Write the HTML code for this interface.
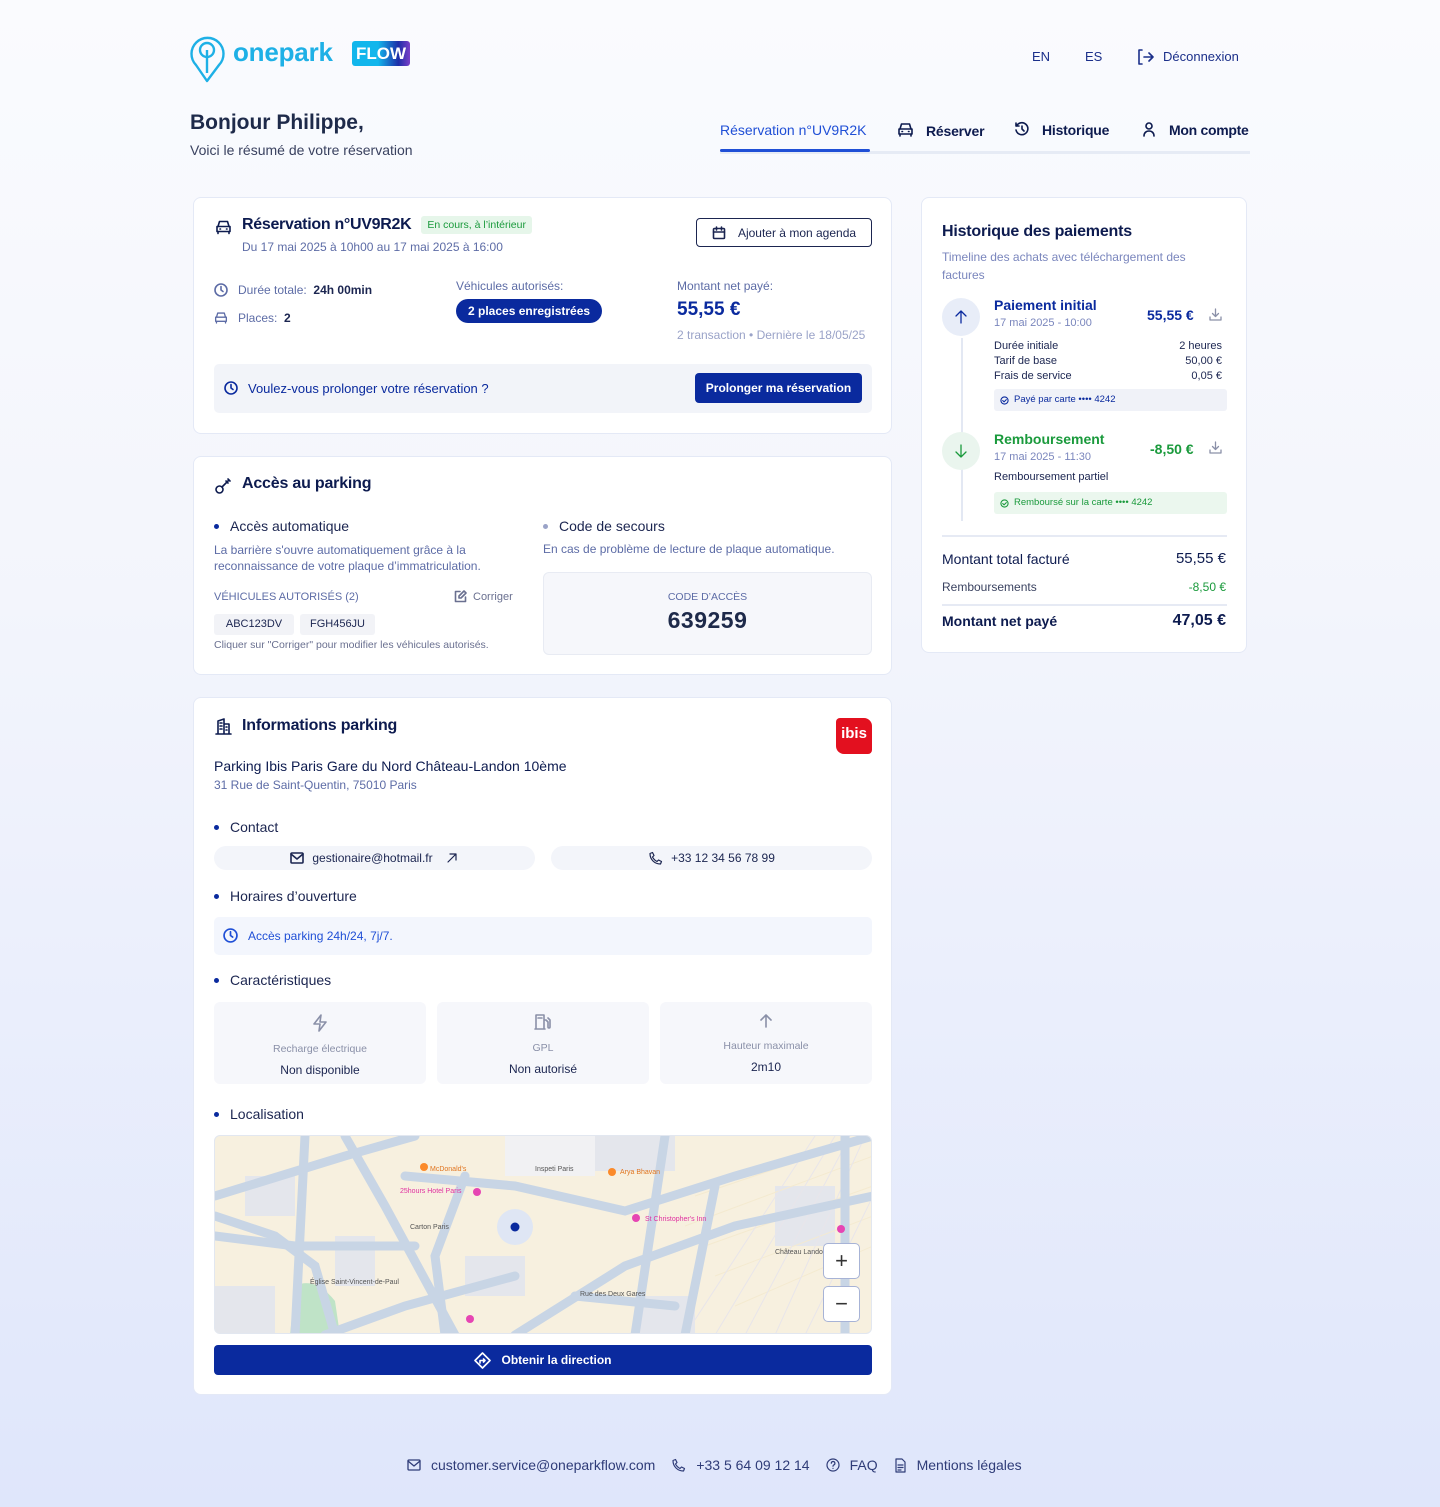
<!DOCTYPE html>
<html><head><meta charset="utf-8"><style>
*{box-sizing:border-box;margin:0;padding:0}
body{width:1440px;height:1507px;font-family:"Liberation Sans",Arial,sans-serif;background:linear-gradient(180deg,#fafbfe 0%,#f3f5fc 40%,#dfe6fb 100%);position:relative;overflow:hidden;color:#0d1b4f}
.a{position:absolute}
.card{position:absolute;background:#fff;border:1px solid #e4e9f6;border-radius:8px}
.nav{color:#0d1b4f;font-size:14px;font-weight:bold}
.muted{color:#5d6ca6}
.ico{fill:none;stroke:currentColor;stroke-width:1.6;stroke-linecap:round;stroke-linejoin:round}
.dot{width:5px;height:5px;border-radius:50%;background:#0a2a9e;display:inline-block}
.pill{position:absolute;background:#f3f5fa;border-radius:14px;height:24px;font-size:12px;display:flex;align-items:center;justify-content:center;gap:8px;color:#1b2550}
.feat{position:absolute;background:#f6f7fb;border-radius:6px;height:82px;width:212px;text-align:center;top:304px}
.feat .l{font-size:10.5px;color:#8a90a8;margin-top:6px}
.feat .v{font-size:12px;color:#1b2550;margin-top:8px}
</style></head><body>

<!-- Logo -->
<svg class="a" style="left:189px;top:31px" width="38" height="52" viewBox="0 0 38 52"><path d="M18 50 L7 34 A16 16 0 1 1 30 34 Z" fill="none" stroke="#1eb0e6" stroke-width="2.4" stroke-linejoin="round"/><circle cx="18" cy="19" r="7" fill="none" stroke="#1eb0e6" stroke-width="2.4"/><path d="M18 19 V42" stroke="#1eb0e6" stroke-width="2.4"/></svg>
<div class="a" style="left:233px;top:37px;font-size:26px;font-weight:bold;color:#1eb0e6;letter-spacing:-0.2px">onepark</div>
<div class="a" style="left:352px;top:41px;width:58px;height:25px;border-radius:3px;background:linear-gradient(90deg,#12b6ec 0%,#12b6ec 45%,#1d2ea8 80%,#7a3fc8 100%);color:#fff;font-weight:bold;font-size:17px;text-align:center;line-height:25px">FLOW</div>

<div class="a" style="left:1032px;top:49px;font-size:13px;color:#1b2f8a">EN</div>
<div class="a" style="left:1085px;top:49px;font-size:13px;color:#1b2f8a">ES</div>
<svg class="a ico" style="left:1136px;top:48px;color:#1b2f8a" width="18" height="18" viewBox="0 0 18 18"><path d="M6 2H3v14h3M8 9h9M13 5l4 4-4 4"/></svg>
<div class="a" style="left:1163px;top:49px;font-size:13px;color:#1b2f8a">Déconnexion</div>

<div class="a" style="left:190px;top:111px;font-size:21px;font-weight:bold;color:#1e2a4a">Bonjour Philippe,</div>
<div class="a" style="left:190px;top:142px;font-size:14px;color:#3a4260">Voici le résumé de votre réservation</div>

<!-- tabs -->
<div class="a" style="left:720px;top:151px;width:530px;height:3px;background:#e6ebf5"></div>
<div class="a" style="left:720px;top:149px;width:150px;height:3px;background:#1f4fd6;border-radius:2px"></div>
<div class="a" style="left:720px;top:122px;font-size:14px;color:#1f4fd6">Réservation n°UV9R2K</div>
<svg class="a ico" style="left:897px;top:122px;color:#0d1b4f" width="17" height="16" viewBox="0 0 17 16"><path d="M3 7l1.5-5h8L14 7M2 7h13v5H2zM3 12v2M14 12v2M5 9.5h.5M11.5 9.5h.5"/></svg>
<div class="a nav" style="left:926px;top:123px;letter-spacing:-0.2px">Réserver</div>
<svg class="a ico" style="left:1014px;top:121px;color:#0d1b4f" width="16" height="16" viewBox="0 0 16 16"><path d="M2.5 5A6 6 0 1 1 2 9M2 2v3h3M8 5v3l2 2"/></svg>
<div class="a nav" style="left:1042px;top:122px;letter-spacing:-0.2px">Historique</div>
<svg class="a ico" style="left:1141px;top:121px;color:#0d1b4f" width="16" height="16" viewBox="0 0 16 16"><circle cx="8" cy="5" r="3"/><path d="M3 15c0-3 2-5 5-5s5 2 5 5"/></svg>
<div class="a nav" style="left:1169px;top:122px;letter-spacing:-0.3px">Mon compte</div>

<!-- Card 1 -->
<div class="card" style="left:193px;top:197px;width:699px;height:237px">
  <svg class="a ico" style="left:21px;top:21px;color:#0d1b4f" width="17" height="17" viewBox="0 0 17 16"><path d="M3 7l1.5-5h8L14 7M2 7h13v5H2zM3 12v2M14 12v2M5 9.5h.5M11.5 9.5h.5"/></svg>
  <div class="a" style="left:48px;top:18px;display:flex;align-items:center;gap:10px"><span style="font-size:16px;font-weight:bold;color:#0d1b4f;letter-spacing:-0.3px">Réservation n°UV9R2K</span><span style="background:#e6f6ea;color:#1a9a3c;font-size:10.5px;padding:3px 6px;border-radius:3px">En cours, à l’intérieur</span></div>
  <div class="a muted" style="left:48px;top:42px;font-size:12px">Du 17 mai 2025 à 10h00 au 17 mai 2025 à 16:00</div>
  <div class="a" style="left:502px;top:20px;width:176px;height:29px;border:1px solid #1b2550;border-radius:4px;font-size:12px;color:#1b2550;display:flex;align-items:center;justify-content:center;gap:12px"><svg class="ico" width="14" height="14" viewBox="0 0 14 14"><rect x="1.5" y="2.5" width="11" height="10" rx="1"/><path d="M1.5 6h11M4.5 1v3M9.5 1v3"/></svg>Ajouter à mon agenda</div>

  <svg class="a ico" style="left:20px;top:85px;color:#5d6ca6" width="14" height="14" viewBox="0 0 14 14"><circle cx="7" cy="7" r="6"/><path d="M7 3.5V7l2 1.5"/></svg>
  <div class="a" style="left:44px;top:85px;font-size:12px"><span class="muted">Durée totale:</span>&nbsp; <span style="color:#1b2550;font-weight:bold">24h 00min</span></div>
  <svg class="a ico" style="left:20px;top:113px;color:#5d6ca6" width="14" height="14" viewBox="0 0 17 16"><path d="M3 7l1.5-5h8L14 7M2 7h13v5H2zM3 12v2M14 12v2"/></svg>
  <div class="a" style="left:44px;top:113px;font-size:12px"><span class="muted">Places:</span>&nbsp; <span style="color:#1b2550;font-weight:bold">2</span></div>

  <div class="a muted" style="left:262px;top:81px;font-size:12px">Véhicules autorisés:</div>
  <div class="a" style="left:262px;top:101px;background:#0a2a9e;color:#fff;font-size:12px;font-weight:bold;padding:0 12px;height:24px;line-height:24px;border-radius:12px">2 places enregistrées</div>

  <div class="a muted" style="left:483px;top:81px;font-size:12px">Montant net payé:</div>
  <div class="a" style="left:483px;top:101px;font-size:19px;font-weight:bold;color:#0a2a9e">55,55 €</div>
  <div class="a" style="left:483px;top:130px;font-size:12px;color:#9aa3c8">2 transaction • Dernière le 18/05/25</div>

  <div class="a" style="left:20px;top:166px;width:658px;height:49px;background:#f2f4f9;border-radius:5px">
    <svg class="a ico" style="left:10px;top:17px;color:#0a2a9e" width="14" height="14" viewBox="0 0 14 14"><circle cx="7" cy="7" r="6"/><path d="M7 3.5V7l2 1.5"/></svg>
    <div class="a" style="left:34px;top:17px;font-size:13px;color:#0a2a9e">Voulez-vous prolonger votre réservation ?</div>
    <div class="a" style="left:481px;top:9px;width:167px;height:30px;background:#0a2a9e;border-radius:4px;color:#fff;font-size:12px;font-weight:bold;text-align:center;line-height:30px">Prolonger ma réservation</div>
  </div>
</div>

<!-- Card 2 -->
<div class="card" style="left:193px;top:456px;width:699px;height:219px">
  <svg class="a ico" style="left:20px;top:20px;color:#0d1b4f" width="18" height="18" viewBox="0 0 18 18"><circle cx="5.5" cy="12.5" r="3.5"/><path d="M8 10l7-7M12 4l2 2M14 2l2 2"/></svg>
  <div class="a" style="left:48px;top:18px;font-size:16px;font-weight:bold;color:#0d1b4f;letter-spacing:-0.2px">Accès au parking</div>
  <div class="a" style="left:20px;top:61px;font-size:14px;color:#1b2550;display:flex;align-items:center;gap:11px"><span class="dot"></span>Accès automatique</div>
  <div class="a muted" style="left:20px;top:85px;font-size:12px;line-height:16px;width:300px">La barrière s'ouvre automatiquement grâce à la reconnaissance de votre plaque d’immatriculation.</div>
  <div class="a muted" style="left:20px;top:134px;font-size:11px">VÉHICULES AUTORISÉS (2)</div>
  <div class="a" style="left:260px;top:133px;font-size:11px;color:#6a7090;display:flex;gap:6px;align-items:center"><svg class="ico" width="13" height="13" viewBox="0 0 13 13"><path d="M6 1.5H1.5v10h10V7M10 1l2 2-5 5H5V6z"/></svg>Corriger</div>
  <div class="a" style="left:20px;top:157px;width:80px;height:21px;background:#f2f3f7;border-radius:3px;font-size:11px;text-align:center;line-height:21px;color:#1b2550">ABC123DV</div>
  <div class="a" style="left:106px;top:157px;width:75px;height:21px;background:#f2f3f7;border-radius:3px;font-size:11px;text-align:center;line-height:21px;color:#1b2550">FGH456JU</div>
  <div class="a" style="left:20px;top:182px;font-size:10.5px;color:#6a7090">Cliquer sur "Corriger" pour modifier les véhicules autorisés.</div>

  <div class="a" style="left:349px;top:61px;font-size:14px;color:#1b2550;display:flex;align-items:center;gap:11px"><span class="dot" style="background:#9aa3c8"></span>Code de secours</div>
  <div class="a muted" style="left:349px;top:85px;font-size:12px">En cas de problème de lecture de plaque automatique.</div>
  <div class="a" style="left:349px;top:115px;width:329px;height:83px;background:#f6f7fb;border:1px solid #e8ebf3;border-radius:6px;text-align:center">
    <div style="font-size:10.5px;color:#5d6ca6;margin-top:18px">CODE D’ACCÈS</div>
    <div style="font-size:23px;font-weight:bold;color:#1e2a4a;margin-top:4px;letter-spacing:0.5px">639259</div>
  </div>
</div>

<!-- Card 3 -->
<div class="card" style="left:193px;top:697px;width:699px;height:698px">
  <svg class="a ico" style="left:20px;top:19px;color:#0d1b4f" width="18" height="18" viewBox="0 0 18 18"><path d="M4 17V4l6-2v15M10 7h5v10M2 17h15M6 6h2M6 9h2M6 12h2M12 10h1M12 13h1"/></svg>
  <div class="a" style="left:48px;top:19px;font-size:16px;font-weight:bold;color:#0d1b4f;letter-spacing:-0.2px">Informations parking</div>
  <div class="a" style="left:642px;top:20px;width:36px;height:36px;background:#e3101f;border-radius:4px 8px 4px 8px;color:#fff;font-weight:bold;font-size:15px;text-align:center;line-height:32px">ibis</div>
  <div class="a" style="left:20px;top:60px;font-size:14px;color:#0d1b4f">Parking Ibis Paris Gare du Nord Château-Landon 10ème</div>
  <div class="a muted" style="left:20px;top:80px;font-size:12px">31 Rue de Saint-Quentin, 75010 Paris</div>

  <div class="a" style="left:20px;top:121px;font-size:14px;color:#1b2550;display:flex;align-items:center;gap:11px"><span class="dot"></span>Contact</div>
  <div class="pill" style="left:20px;top:148px;width:321px"><svg class="ico" width="14" height="12" viewBox="0 0 14 12"><rect x="1" y="1" width="12" height="10" rx="1"/><path d="M1 2l6 5 6-5"/></svg>gestionaire@hotmail.fr<svg class="ico" width="14" height="14" viewBox="0 0 14 14" style="margin-left:4px;stroke-width:1.2"><path d="M3 11l8-8M5 3h6v6"/></svg></div>
  <div class="pill" style="left:357px;top:148px;width:321px"><svg class="ico" style="stroke-width:1.2" width="15" height="15" viewBox="0 0 15 15"><path d="M2 2.5c0 6 4.5 10.5 10.5 10.5l1-2.5-3-1.5-1.5 1.5c-2-1-3.5-2.5-4.5-4.5L6 4.5 4.5 1.5z"/></svg>+33 12 34 56 78 99</div>

  <div class="a" style="left:20px;top:190px;font-size:14px;color:#1b2550;display:flex;align-items:center;gap:11px"><span class="dot"></span>Horaires d’ouverture</div>
  <div class="a" style="left:20px;top:219px;width:658px;height:38px;background:#f3f6fd;border-radius:5px">
    <svg class="a ico" style="left:9px;top:11px;color:#1f4fd6" width="15" height="15" viewBox="0 0 14 14"><circle cx="7" cy="7" r="6"/><path d="M7 3.5V7l2 1.5"/></svg>
    <div class="a" style="left:34px;top:12px;font-size:12px;color:#1f4fd6">Accès parking 24h/24, 7j/7.</div>
  </div>

  <div class="a" style="left:20px;top:274px;font-size:14px;color:#1b2550;display:flex;align-items:center;gap:11px"><span class="dot"></span>Caractéristiques</div>
  <div class="feat" style="left:20px"><svg class="ico" style="margin-top:12px;color:#8a90a8" width="18" height="18" viewBox="0 0 18 18"><path d="M10 1L3 10h6l-1 7 7-9H9z"/></svg><div class="l">Recharge électrique</div><div class="v">Non disponible</div></div>
  <div class="feat" style="left:243px"><svg class="ico" style="margin-top:11px;color:#8a90a8" width="18" height="18" viewBox="0 0 18 18"><path d="M2 16V2h8v14M1 16h10M4 5h4M10 7h2l2 2v5a1 1 0 0 0 2 0V7l-2-2"/></svg><div class="l">GPL</div><div class="v">Non autorisé</div></div>
  <div class="feat" style="left:466px"><svg class="ico" style="margin-top:11px;color:#8a90a8" width="16" height="16" viewBox="0 0 16 16"><path d="M8 14V2M3 7l5-5 5 5"/></svg><div class="l">Hauteur maximale</div><div class="v">2m10</div></div>

  <div class="a" style="left:20px;top:408px;font-size:14px;color:#1b2550;display:flex;align-items:center;gap:11px"><span class="dot"></span>Localisation</div>

  <!-- map -->
  <div class="a" style="left:20px;top:437px;width:658px;height:199px;border-radius:6px;overflow:hidden;border:1px solid #e2e7f0;background:#f7f0df">
    <svg width="658" height="199" viewBox="0 0 658 199">
      <g fill="#e4e6ec"><rect x="30" y="40" width="50" height="40"/><rect x="120" y="100" width="40" height="50"/><rect x="250" y="120" width="60" height="40"/><rect x="370" y="0" width="90" height="35"/><rect x="560" y="50" width="60" height="60"/><rect x="420" y="160" width="60" height="39"/><rect x="0" y="150" width="60" height="49"/></g>
      <rect x="290" y="0" width="90" height="40" fill="#f1f1f3"/>
      <g stroke="#f4ead0" stroke-width="1"><path d="M480 60L658 0M470 90L658 20M490 110L658 50M500 140L658 80M520 170L658 110"/></g>
      <g stroke="#e8e5ea" stroke-width="1"><path d="M470 199L600 0M500 199L620 0M530 199L635 0M560 199L650 0M590 199L658 60"/></g>
      <path d="M80 150 Q100 140 120 165 L125 199 L75 199 Z" fill="#bfe3c7"/>
      <g stroke="#c8d5e5" stroke-width="9" fill="none" stroke-linecap="round">
        <path d="M0 60 L130 20 L200 0"/>
        <path d="M130 0 L170 70 L240 199"/>
        <path d="M190 40 L300 50 L410 75 L520 40 L658 0"/>
        <path d="M300 199 L410 130 L520 90 L658 60"/>
        <path d="M110 199 L190 170 L300 140"/>
        <path d="M0 80 L60 100 L100 130 L120 199"/>
        <path d="M90 0 L80 199"/>
        <path d="M450 0 L420 199"/>
        <path d="M500 50 L470 199"/>
        <path d="M250 40 L220 120 L230 199"/>
        <path d="M0 100 L80 110 L200 110"/>
        <path d="M630 0 L630 199"/>
        <path d="M360 160 L460 170"/>
      </g>
      <circle cx="300" cy="91" r="18" fill="#dfe6f4"/>
      <circle cx="300" cy="91" r="4.5" fill="#0a2a9e"/>
      <g font-family="Liberation Sans" font-size="7" fill="#555"><text x="215" y="35" fill="#e07520">McDonald's</text><text x="320" y="35">Inspeti Paris</text><text x="185" y="57" fill="#e030a0">25hours Hotel Paris</text><text x="430" y="85" fill="#e030a0">St Christopher's Inn</text><text x="195" y="93">Carton Paris</text><text x="95" y="148">Église Saint-Vincent-de-Paul</text><text x="560" y="118">Château Landon</text><text x="365" y="160">Rue des Deux Gares</text><text x="405" y="38" fill="#e07520">Arya Bhavan</text></g>
      <g fill="#fb8a2a"><circle cx="209" cy="31" r="4"/><circle cx="397" cy="36" r="4"/></g>
      <g fill="#e645b3"><circle cx="262" cy="56" r="4"/><circle cx="421" cy="82" r="4"/><circle cx="626" cy="93" r="4"/><circle cx="255" cy="183" r="4"/></g>
    </svg>
    <div class="a" style="left:608px;top:107px;width:37px;height:36px;background:#fff;border:1px solid #a7b3d6;border-radius:5px;text-align:center;line-height:34px;font-size:22px;color:#333">+</div>
    <div class="a" style="left:608px;top:150px;width:37px;height:36px;background:#fff;border:1px solid #a7b3d6;border-radius:5px;text-align:center;line-height:34px;font-size:22px;color:#333">−</div>
  </div>
  <div class="a" style="left:20px;top:647px;width:658px;height:30px;background:#0a2a9e;border-radius:4px;color:#fff;font-size:12px;font-weight:bold;display:flex;align-items:center;justify-content:center;gap:10px"><svg class="ico" width="17" height="17" viewBox="0 0 17 17"><path d="M8.5 1L16 8.5 8.5 16 1 8.5z"/><path d="M6 11V8.5h5M9.5 7l1.5 1.5L9.5 10"/></svg>Obtenir la direction</div>
</div>

<!-- Right card -->
<div class="card" style="left:921px;top:197px;width:326px;height:456px">
  <div class="a" style="left:20px;top:25px;font-size:16px;font-weight:bold;color:#0d1b4f;letter-spacing:-0.2px">Historique des paiements</div>
  <div class="a muted" style="left:20px;top:50px;font-size:12px;line-height:18px;width:270px;color:#7a86bd">Timeline des achats avec téléchargement des factures</div>
  <div class="a" style="left:39px;top:140px;width:2px;height:183px;background:#e3e8f3"></div>
  <div class="a" style="left:20px;top:100px;width:38px;height:38px;border-radius:50%;background:#e8edf8"></div>
  <svg class="a ico" style="left:31px;top:111px;color:#0a2a9e;stroke-width:1.3" width="16" height="16" viewBox="0 0 16 16"><path d="M8 14V2M3 7l5-5 5 5"/></svg>
  <div class="a" style="left:72px;top:99px;font-size:14px;font-weight:bold;color:#0a2a9e">Paiement initial</div>
  <div class="a" style="left:72px;top:119px;font-size:11px;color:#7a86bd">17 mai 2025 - 10:00</div>
  <div class="a" style="left:225px;top:109px;font-size:14px;font-weight:bold;color:#0a2a9e">55,55 €</div>
  <svg class="a ico" style="left:287px;top:110px;color:#8a90a8;stroke-width:1.3" width="13" height="13" viewBox="0 0 13 13"><path d="M6.5 1v7M3.5 5.5l3 3 3-3M1 9v3h11V9"/></svg>
  <div class="a" style="left:72px;top:141px;width:228px;font-size:11px;color:#1b2550;line-height:15px">
    <div style="display:flex;justify-content:space-between"><span>Durée initiale</span><span>2 heures</span></div>
    <div style="display:flex;justify-content:space-between"><span>Tarif de base</span><span>50,00 €</span></div>
    <div style="display:flex;justify-content:space-between"><span>Frais de service</span><span>0,05 €</span></div>
  </div>
  <div class="a" style="left:72px;top:191px;width:233px;height:22px;background:#f0f2f8;border-radius:3px;font-size:9.5px;color:#0a2a9e;line-height:22px;padding-left:20px">Payé par carte •••• 4242</div>
  <svg class="a ico" style="left:78px;top:198px;color:#0a2a9e;stroke-width:1.2" width="9" height="9" viewBox="0 0 10 10"><circle cx="5" cy="5" r="4"/><path d="M3 5l1.5 1.5L7 4"/></svg>

  <div class="a" style="left:20px;top:234px;width:38px;height:38px;border-radius:50%;background:#eaf5ee"></div>
  <svg class="a ico" style="left:31px;top:245px;color:#1a9a3c;stroke-width:1.3" width="16" height="16" viewBox="0 0 16 16"><path d="M8 2v12M3 9l5 5 5-5"/></svg>
  <div class="a" style="left:72px;top:233px;font-size:14px;font-weight:bold;color:#1a9a3c">Remboursement</div>
  <div class="a" style="left:72px;top:253px;font-size:11px;color:#7a86bd">17 mai 2025 - 11:30</div>
  <div class="a" style="left:228px;top:243px;font-size:14px;font-weight:bold;color:#1a9a3c">-8,50 €</div>
  <svg class="a ico" style="left:287px;top:243px;color:#8a90a8;stroke-width:1.3" width="13" height="13" viewBox="0 0 13 13"><path d="M6.5 1v7M3.5 5.5l3 3 3-3M1 9v3h11V9"/></svg>
  <div class="a" style="left:72px;top:273px;font-size:11px;color:#1b2550">Remboursement partiel</div>
  <div class="a" style="left:72px;top:294px;width:233px;height:22px;background:#ebf7ee;border-radius:3px;font-size:9.5px;color:#1a9a3c;line-height:22px;padding-left:20px">Remboursé sur la carte •••• 4242</div>
  <svg class="a ico" style="left:78px;top:301px;color:#1a9a3c;stroke-width:1.2" width="9" height="9" viewBox="0 0 10 10"><circle cx="5" cy="5" r="4"/><path d="M3 5l1.5 1.5L7 4"/></svg>

  <div class="a" style="left:20px;top:337px;width:285px;height:2px;background:#e6eaf4"></div>
  <div class="a" style="left:20px;top:353px;font-size:14px;color:#0d1b4f">Montant total facturé</div>
  <div class="a" style="right:20px;top:352px;font-size:15px;color:#0d1b4f">55,55 €</div>
  <div class="a" style="left:20px;top:382px;font-size:12px;color:#3a4260">Remboursements</div>
  <div class="a" style="right:20px;top:382px;font-size:12px;color:#1a9a3c">-8,50 €</div>
  <div class="a" style="left:20px;top:406px;width:285px;height:2px;background:#e6eaf4"></div>
  <div class="a" style="left:20px;top:415px;font-size:14px;font-weight:bold;color:#0d1b4f">Montant net payé</div>
  <div class="a" style="right:20px;top:414px;font-size:16px;font-weight:bold;color:#0d1b4f">47,05 €</div>
</div>

<!-- footer -->
<div class="a" style="left:407px;top:1457px;font-size:14px;color:#2f3c78;display:flex;align-items:center;gap:10px;white-space:nowrap">
  <svg class="ico" style="stroke-width:1.3" width="14" height="12" viewBox="0 0 14 12"><rect x="1" y="1" width="12" height="10" rx="1"/><path d="M1 2l6 5 6-5"/></svg><span>customer.service@oneparkflow.com</span>
  <svg class="ico" style="margin-left:6px;stroke-width:1.2" width="15" height="15" viewBox="0 0 15 15"><path d="M2 2.5c0 6 4.5 10.5 10.5 10.5l1-2.5-3-1.5-1.5 1.5c-2-1-3.5-2.5-4.5-4.5L6 4.5 4.5 1.5z"/></svg><span>+33 5 64 09 12 14</span>
  <svg class="ico" style="margin-left:6px;stroke-width:1.2" width="14" height="14" viewBox="0 0 14 14"><circle cx="7" cy="7" r="6"/><path d="M5.3 5.3a1.8 1.8 0 1 1 2.4 1.7C7 7.3 7 7.8 7 8.3M7 10.3v.1"/></svg><span>FAQ</span>
  <svg class="ico" style="margin-left:6px;stroke-width:1.2" width="13" height="15" viewBox="0 0 13 15"><path d="M2 1h6l3 3v10H2zM4 7h5M4 9.5h5M4 12h3"/></svg><span>Mentions légales</span>
</div>
</body></html>
